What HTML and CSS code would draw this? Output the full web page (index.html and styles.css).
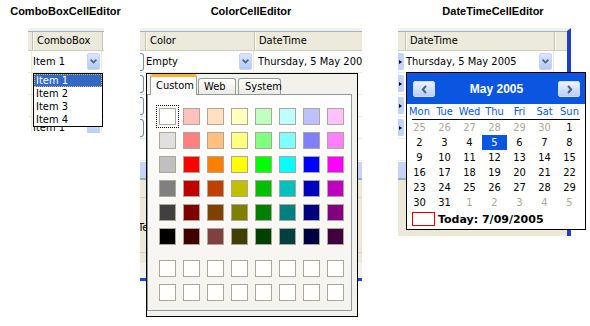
FILE: index.html
```html
<!DOCTYPE html>
<html lang="en">
<head>
    <meta charset="UTF-8">
    <meta name="viewport" content="width=device-width, initial-scale=1.0">
    <title>Cell Editors</title>
    <link rel="stylesheet" href="styles.css">
</head>
<body>
    <div class="shots">
        <!-- ComboBox editor with its list dropped down -->
        <section class="shot shot-combo">
            <h2 class="title">ComboBoxCellEditor</h2>
            <div class="frame frame-combo">
                <div class="grid">
                    <div class="head">
                        <span class="hc c1-stub"></span>
                        <span class="hc sep c1-combo">ComboBox</span>
                        <span class="hc sep rest"></span>
                    </div>
                    <div class="row">
                        <span class="cell c1-stub"></span>
                        <span class="cell c1-combo">Item 1<span class="dd-btn"><svg width="7" height="5" viewBox="0 0 7 5"><path d="M0.6 0.6 L3.5 3.5 L6.4 0.6" fill="none" stroke="#4d6185" stroke-width="1.7"/></svg></span></span>
                    </div>
                    <div class="row"><span class="cell c1-stub"></span><span class="cell c1-combo"></span></div>
                    <div class="row"><span class="cell c1-stub"></span><span class="cell c1-combo"></span></div>
                    <div class="row">
                        <span class="cell c1-stub"></span>
                        <span class="cell c1-combo">Item 1<span class="dd-btn"></span></span>
                    </div>
                </div>
                <ul class="list-popup">
                    <li class="list-item selected">Item 1</li>
                    <li class="list-item">Item 2</li>
                    <li class="list-item">Item 3</li>
                    <li class="list-item">Item 4</li>
                </ul>
            </div>
        </section>

        <!-- Color editor with the palette open -->
        <section class="shot shot-color">
            <h2 class="title">ColorCellEditor</h2>
            <div class="frame frame-color">
                <div class="grid">
                    <div class="head">
                        <span class="hc c2-stub"></span>
                        <span class="hc sep c2-color">Color</span>
                        <span class="hc sep rest">DateTime</span>
                    </div>
                    <div class="row">
                        <span class="cell c2-stub"><span class="rh-round"></span></span>
                        <span class="cell c2-color">Empty<span class="dd-btn"><svg width="7" height="5" viewBox="0 0 7 5"><path d="M0.6 0.6 L3.5 3.5 L6.4 0.6" fill="none" stroke="#4d6185" stroke-width="1.7"/></svg></span></span>
                        <span class="cell rest pad">Thursday, 5 May 2005</span>
                    </div>
                    <div class="row">
                        <span class="cell c2-stub"><span class="rh-round"></span></span>
                        <span class="cell c2-color"></span>
                        <span class="cell rest"></span>
                    </div>
                    <div class="row">
                        <span class="cell c2-stub"><span class="rh-round"></span></span>
                        <span class="cell c2-color"></span>
                        <span class="cell rest pad">Friday, 6 May 2005</span>
                    </div>
                    <div class="row">
                        <span class="cell c2-stub"><span class="rh-round"></span></span>
                        <span class="cell c2-color"></span>
                        <span class="cell rest"></span>
                    </div>
                    <div class="row"><span class="cell c2-stub"></span><span class="cell c2-color"></span><span class="cell rest"></span></div>
                    <div class="band"></div>
                    <div class="lower">
                        <div class="lower-line"></div>
                        <div class="lower-text">Text</div>
                        <div class="lower-line"></div>
                    </div>
                    <div class="lower-light"></div>
                    <div class="lower-blue"></div>
                </div>
                <div class="color-popup">
                    <div class="tabs">
                        <span class="tab tab-custom active">Custom</span>
                        <span class="tab tab-web">Web</span>
                        <span class="tab tab-system">System</span>
                    </div>
                    <div class="tab-panel">
                        <div class="swatches">
                            <span class="sw focus" style="background:#ffffff"></span>
                            <span class="sw" style="background:#ffc0c0"></span>
                            <span class="sw" style="background:#ffe0c0"></span>
                            <span class="sw" style="background:#ffffc0"></span>
                            <span class="sw" style="background:#c0ffc0"></span>
                            <span class="sw" style="background:#c0ffff"></span>
                            <span class="sw" style="background:#c0c0ff"></span>
                            <span class="sw" style="background:#ffc0ff"></span>

                            <span class="sw" style="background:#e0e0e0"></span>
                            <span class="sw" style="background:#ff8080"></span>
                            <span class="sw" style="background:#ffc080"></span>
                            <span class="sw" style="background:#ffff80"></span>
                            <span class="sw" style="background:#80ff80"></span>
                            <span class="sw" style="background:#80ffff"></span>
                            <span class="sw" style="background:#8080ff"></span>
                            <span class="sw" style="background:#ff80ff"></span>

                            <span class="sw" style="background:#c0c0c0"></span>
                            <span class="sw" style="background:#ff0000"></span>
                            <span class="sw" style="background:#ff8000"></span>
                            <span class="sw" style="background:#ffff00"></span>
                            <span class="sw" style="background:#00ff00"></span>
                            <span class="sw" style="background:#00ffff"></span>
                            <span class="sw" style="background:#0000ff"></span>
                            <span class="sw" style="background:#ff00ff"></span>

                            <span class="sw" style="background:#808080"></span>
                            <span class="sw" style="background:#c00000"></span>
                            <span class="sw" style="background:#c04000"></span>
                            <span class="sw" style="background:#c0c000"></span>
                            <span class="sw" style="background:#00c000"></span>
                            <span class="sw" style="background:#00c0c0"></span>
                            <span class="sw" style="background:#0000c0"></span>
                            <span class="sw" style="background:#c000c0"></span>

                            <span class="sw" style="background:#404040"></span>
                            <span class="sw" style="background:#800000"></span>
                            <span class="sw" style="background:#804000"></span>
                            <span class="sw" style="background:#808000"></span>
                            <span class="sw" style="background:#008000"></span>
                            <span class="sw" style="background:#008080"></span>
                            <span class="sw" style="background:#000080"></span>
                            <span class="sw" style="background:#800080"></span>

                            <span class="sw" style="background:#000000"></span>
                            <span class="sw" style="background:#400000"></span>
                            <span class="sw" style="background:#804040"></span>
                            <span class="sw" style="background:#404000"></span>
                            <span class="sw" style="background:#004000"></span>
                            <span class="sw" style="background:#004040"></span>
                            <span class="sw" style="background:#000040"></span>
                            <span class="sw" style="background:#400040"></span>
                        </div>
                        <div class="swatches custom">
                            <span class="sw"></span><span class="sw"></span><span class="sw"></span><span class="sw"></span>
                            <span class="sw"></span><span class="sw"></span><span class="sw"></span><span class="sw"></span>
                            <span class="sw"></span><span class="sw"></span><span class="sw"></span><span class="sw"></span>
                            <span class="sw"></span><span class="sw"></span><span class="sw"></span><span class="sw"></span>
                        </div>
                    </div>
                </div>
            </div>
        </section>

        <!-- DateTime editor with the month calendar open -->
        <section class="shot shot-date">
            <h2 class="title">DateTimeCellEditor</h2>
            <div class="frame frame-date">
                <div class="grid">
                    <div class="head">
                        <span class="hc c3-stub"></span>
                        <span class="hc sep c3-date">DateTime</span>
                        <span class="hc sep rest"></span>
                    </div>
                    <div class="row">
                        <span class="cell c3-stub"><span class="rh-arrow"></span></span>
                        <span class="cell c3-date">Thursday, 5 May 2005<span class="dd-btn"><svg width="7" height="5" viewBox="0 0 7 5"><path d="M0.6 0.6 L3.5 3.5 L6.4 0.6" fill="none" stroke="#4d6185" stroke-width="1.7"/></svg></span></span>
                    </div>
                    <div class="row"><span class="cell c3-stub"><span class="rh-arrow"></span></span><span class="cell c3-date"></span></div>
                    <div class="row"><span class="cell c3-stub"><span class="rh-arrow"></span></span><span class="cell c3-date"></span></div>
                    <div class="row"><span class="cell c3-stub"><span class="rh-arrow"></span></span><span class="cell c3-date"></span></div>
                    <div class="row"><span class="cell c3-stub"></span><span class="cell c3-date"></span></div>
                    <div class="band"></div>
                    <div class="lower lower-date"></div>
                </div>
                <div class="cal-popup">
                    <div class="cal-head">
                        <span class="nav-btn"><svg width="7" height="9" viewBox="0 0 7 9"><path d="M5 1 L1.8 4.5 L5 8" fill="none" stroke="#4d6185" stroke-width="2"/></svg></span>
                        <span class="cal-month">May 2005</span>
                        <span class="nav-btn"><svg width="7" height="9" viewBox="0 0 7 9"><path d="M2 1 L5.2 4.5 L2 8" fill="none" stroke="#4d6185" stroke-width="2"/></svg></span>
                    </div>
                    <div class="cal-days">
                        <span>Mon</span><span>Tue</span><span>Wed</span><span>Thu</span><span>Fri</span><span>Sat</span><span>Sun</span>
                    </div>
                    <div class="cal-dates">
                        <span class="other">25</span><span class="other">26</span><span class="other">27</span><span class="other">28</span><span class="other">29</span><span class="other">30</span><span>1</span>
                        <span>2</span><span>3</span><span>4</span><span class="picked">5</span><span>6</span><span>7</span><span>8</span>
                        <span>9</span><span>10</span><span>11</span><span>12</span><span>13</span><span>14</span><span>15</span>
                        <span>16</span><span>17</span><span>18</span><span>19</span><span>20</span><span>21</span><span>22</span>
                        <span>23</span><span>24</span><span>25</span><span>26</span><span>27</span><span>28</span><span>29</span>
                        <span>30</span><span>31</span><span class="other">1</span><span class="other">2</span><span class="other">3</span><span class="other">4</span><span class="other">5</span>
                    </div>
                    <div class="cal-today"><span class="today-box"></span>Today: 7/09/2005</div>
                </div>
            </div>
        </section>
    </div>
</body>
</html>
```

FILE: styles.css
```css
* {
    box-sizing: border-box;
}

body {
    margin: 0;
    background: #fff;
    color: #000;
    font-family: "DejaVu Sans Condensed", "Liberation Sans", sans-serif;
    font-size: 11px;
}

.shots {
    display: flex;
    align-items: flex-start;
}

.shot {
    display: flex;
    flex-direction: column;
}

.shot-combo {
    width: 131px;
}

.shot-color {
    width: 240px;
}

.shot-date {
    width: 190px;
    margin-left: 27px;
}

.title {
    margin: 5px 0 0;
    height: 14px;
    line-height: 14px;
    text-align: center;
    font: bold 11px "Liberation Sans", sans-serif;
}

.frame {
    position: relative;
    margin-top: 9px;
}

.frame-combo {
    margin-left: 28px;
    width: 76px;
    height: 105px;
}

.frame-color {
    margin-left: 9px;
    width: 222px;
    height: 294px;
}

.frame-date {
    width: 173px;
    height: 208px;
}

/* grid backdrop */
.grid {
    height: 100%;
    overflow: hidden;
    background: #fff;
    border-top: 3px solid #f1f0ea;
}

.frame-date .grid {
    border-right: 4px solid #1d3fc8;
}

.head {
    display: flex;
    height: 20px;
    border-top: 1px solid #9fb1cc;
    border-bottom: 1px solid #d2cebd;
    background: #ebeadb;
}

.hc {
    flex-shrink: 0;
    padding-left: 5px;
    line-height: 18px;
    white-space: nowrap;
    overflow: hidden;
}

.hc.sep {
    box-shadow: inset 1px 0 #c5c2b2, inset 2px 0 #fff;
}

.rest {
    flex: 1;
}

.row {
    display: flex;
    height: 22px;
    border-bottom: 1px solid #ebeadb;
}

.cell {
    flex-shrink: 0;
    display: flex;
    align-items: center;
    justify-content: space-between;
    padding-left: 1px;
    border-right: 1px solid #ebeadb;
    white-space: nowrap;
    overflow: hidden;
}

.cell.rest {
    border-right: none;
}

.cell.pad {
    padding-left: 4px;
    justify-content: flex-start;
}

.c1-stub { width: 4px; padding: 0; }
.c1-combo { width: 70px; }
.c2-stub { width: 5px; padding: 0; border-right: none; }
.c2-color { width: 109px; }
.c3-stub { width: 7px; padding: 0; border-right: none; }
.c3-date { width: 149px; }

.dd-btn {
    display: flex;
    align-items: center;
    justify-content: center;
    flex-shrink: 0;
    width: 13px;
    height: 17px;
    margin-right: 1px;
    border: 1px solid #c3d3fd;
    border-radius: 2px;
    background: linear-gradient(#dce6fd, #b3c8f7);
}

.rh-round {
    display: block;
    width: 4px;
    height: 18px;
    border: 1px solid #6f8db8;
    border-left: none;
    border-radius: 0 3px 3px 0;
    background: #fff;
}

.rh-arrow {
    display: flex;
    align-items: center;
    width: 6px;
    height: 17px;
    padding-left: 1px;
    border-radius: 0 2px 2px 0;
    background: #c3d4f8;
}

.rh-arrow::before {
    content: "";
    border-left: 3px solid #000;
    border-top: 2px solid transparent;
    border-bottom: 2px solid transparent;
}

.band {
    height: 18px;
    margin-top: 1px;
    background: #c6d5f5;
    border-bottom: 2px solid #a3a9b6;
}

.lower {
    height: 83px;
    padding-top: 17px;
    background: #ece9d8;
}

.lower-line {
    height: 1px;
    background: #d6d2c2;
}

.lower-text {
    height: 54px;
    padding-top: 3px;
    line-height: 54px;
    margin-left: -2px;
}

.lower-light {
    height: 15px;
    background: #f2f1ec;
}

.lower-blue {
    height: 3px;
    background: #1d46d2;
}

.lower-date {
    height: 60px;
}

/* combo list */
.list-popup {
    position: absolute;
    left: 5px;
    top: 45px;
    width: 70px;
    margin: 0;
    padding: 0;
    list-style: none;
    border: 1px solid #000;
    background: #fff;
}

.list-item {
    height: 13px;
    line-height: 13px;
    padding-left: 2px;
}

.list-item.selected {
    background: #316ac5;
    color: #fff;
    outline: 1px dotted #f0b050;
    outline-offset: -1px;
}

/* colour palette */
.color-popup {
    position: absolute;
    left: 6px;
    top: 45px;
    width: 212px;
    height: 244px;
    display: flex;
    flex-direction: column;
    padding: 0 5px 5px 0;
    border: 1px solid #000;
    background: #f2f1ec;
}

.tabs {
    position: relative;
    z-index: 1;
    display: flex;
    align-items: flex-end;
    height: 21px;
    margin-bottom: -1px;
    padding-left: 3px;
}

.tab {
    height: 16px;
    margin-bottom: 1px;
    padding-left: 5px;
    line-height: 15px;
    border: 1px solid #919b9c;
    border-bottom: none;
    border-radius: 3px 3px 0 0;
    background: linear-gradient(#fff, #ebeae4);
}

.tab-custom { width: 47px; }
.tab-web { width: 38px; margin-left: 1px; }
.tab-system { width: 43px; margin-left: 2px; padding-left: 6px; }

.tab.active {
    height: 21px;
    margin-bottom: 0;
    line-height: 17px;
    border-top: 3px solid #f5b33c;
    background: #fcfcfe;
}

.tab-panel {
    flex: 1;
    padding: 13px 0 0 11px;
    border: 1px solid #919b9c;
    background: linear-gradient(#fefefe, #f4f3ee);
}

.swatches {
    display: grid;
    grid-template-columns: repeat(8, 17px);
    grid-auto-rows: 17px;
    gap: 7px;
}

.swatches.custom {
    margin-top: 15px;
}

.sw {
    border: 1px solid #aca899;
    background: #fff;
}

.sw.focus {
    outline: 1px dotted #000;
    outline-offset: 2px;
}

/* month calendar */
.cal-popup {
    position: absolute;
    left: 8px;
    top: 44px;
    width: 180px;
    height: 158px;
    border: 1px solid #000;
    background: #fff;
}

.cal-head {
    display: flex;
    align-items: center;
    justify-content: space-between;
    height: 31px;
    padding: 1px 5px 0 6px;
    background: #0a56e0;
}

.nav-btn {
    display: flex;
    align-items: center;
    justify-content: center;
    width: 22px;
    height: 16px;
    border: 1px solid #d2def8;
    border-radius: 2px;
    background: linear-gradient(#eef3fe, #b9cdf7);
}

.cal-month {
    color: #fff;
    font: bold 12px "Liberation Sans", sans-serif;
}

.cal-days,
.cal-dates {
    display: grid;
    grid-template-columns: repeat(7, 25px);
    text-align: center;
}

.cal-days {
    height: 16px;
    line-height: 15px;
    color: #0a56e0;
    background: linear-gradient(#000, #000) no-repeat 5px 100% / 168px 1px;
}

.cal-dates {
    grid-auto-rows: 15px;
    line-height: 15px;
}

.cal-dates .other {
    color: #aca899;
}

.cal-dates .picked {
    background: #0a56e0;
    color: #fff;
}

.cal-today {
    display: flex;
    align-items: center;
    gap: 3px;
    height: 18px;
    padding-left: 5px;
    font: bold 11px "DejaVu Sans", sans-serif;
}

.today-box {
    width: 23px;
    height: 14px;
    border: 1px solid #e00000;
}
```
